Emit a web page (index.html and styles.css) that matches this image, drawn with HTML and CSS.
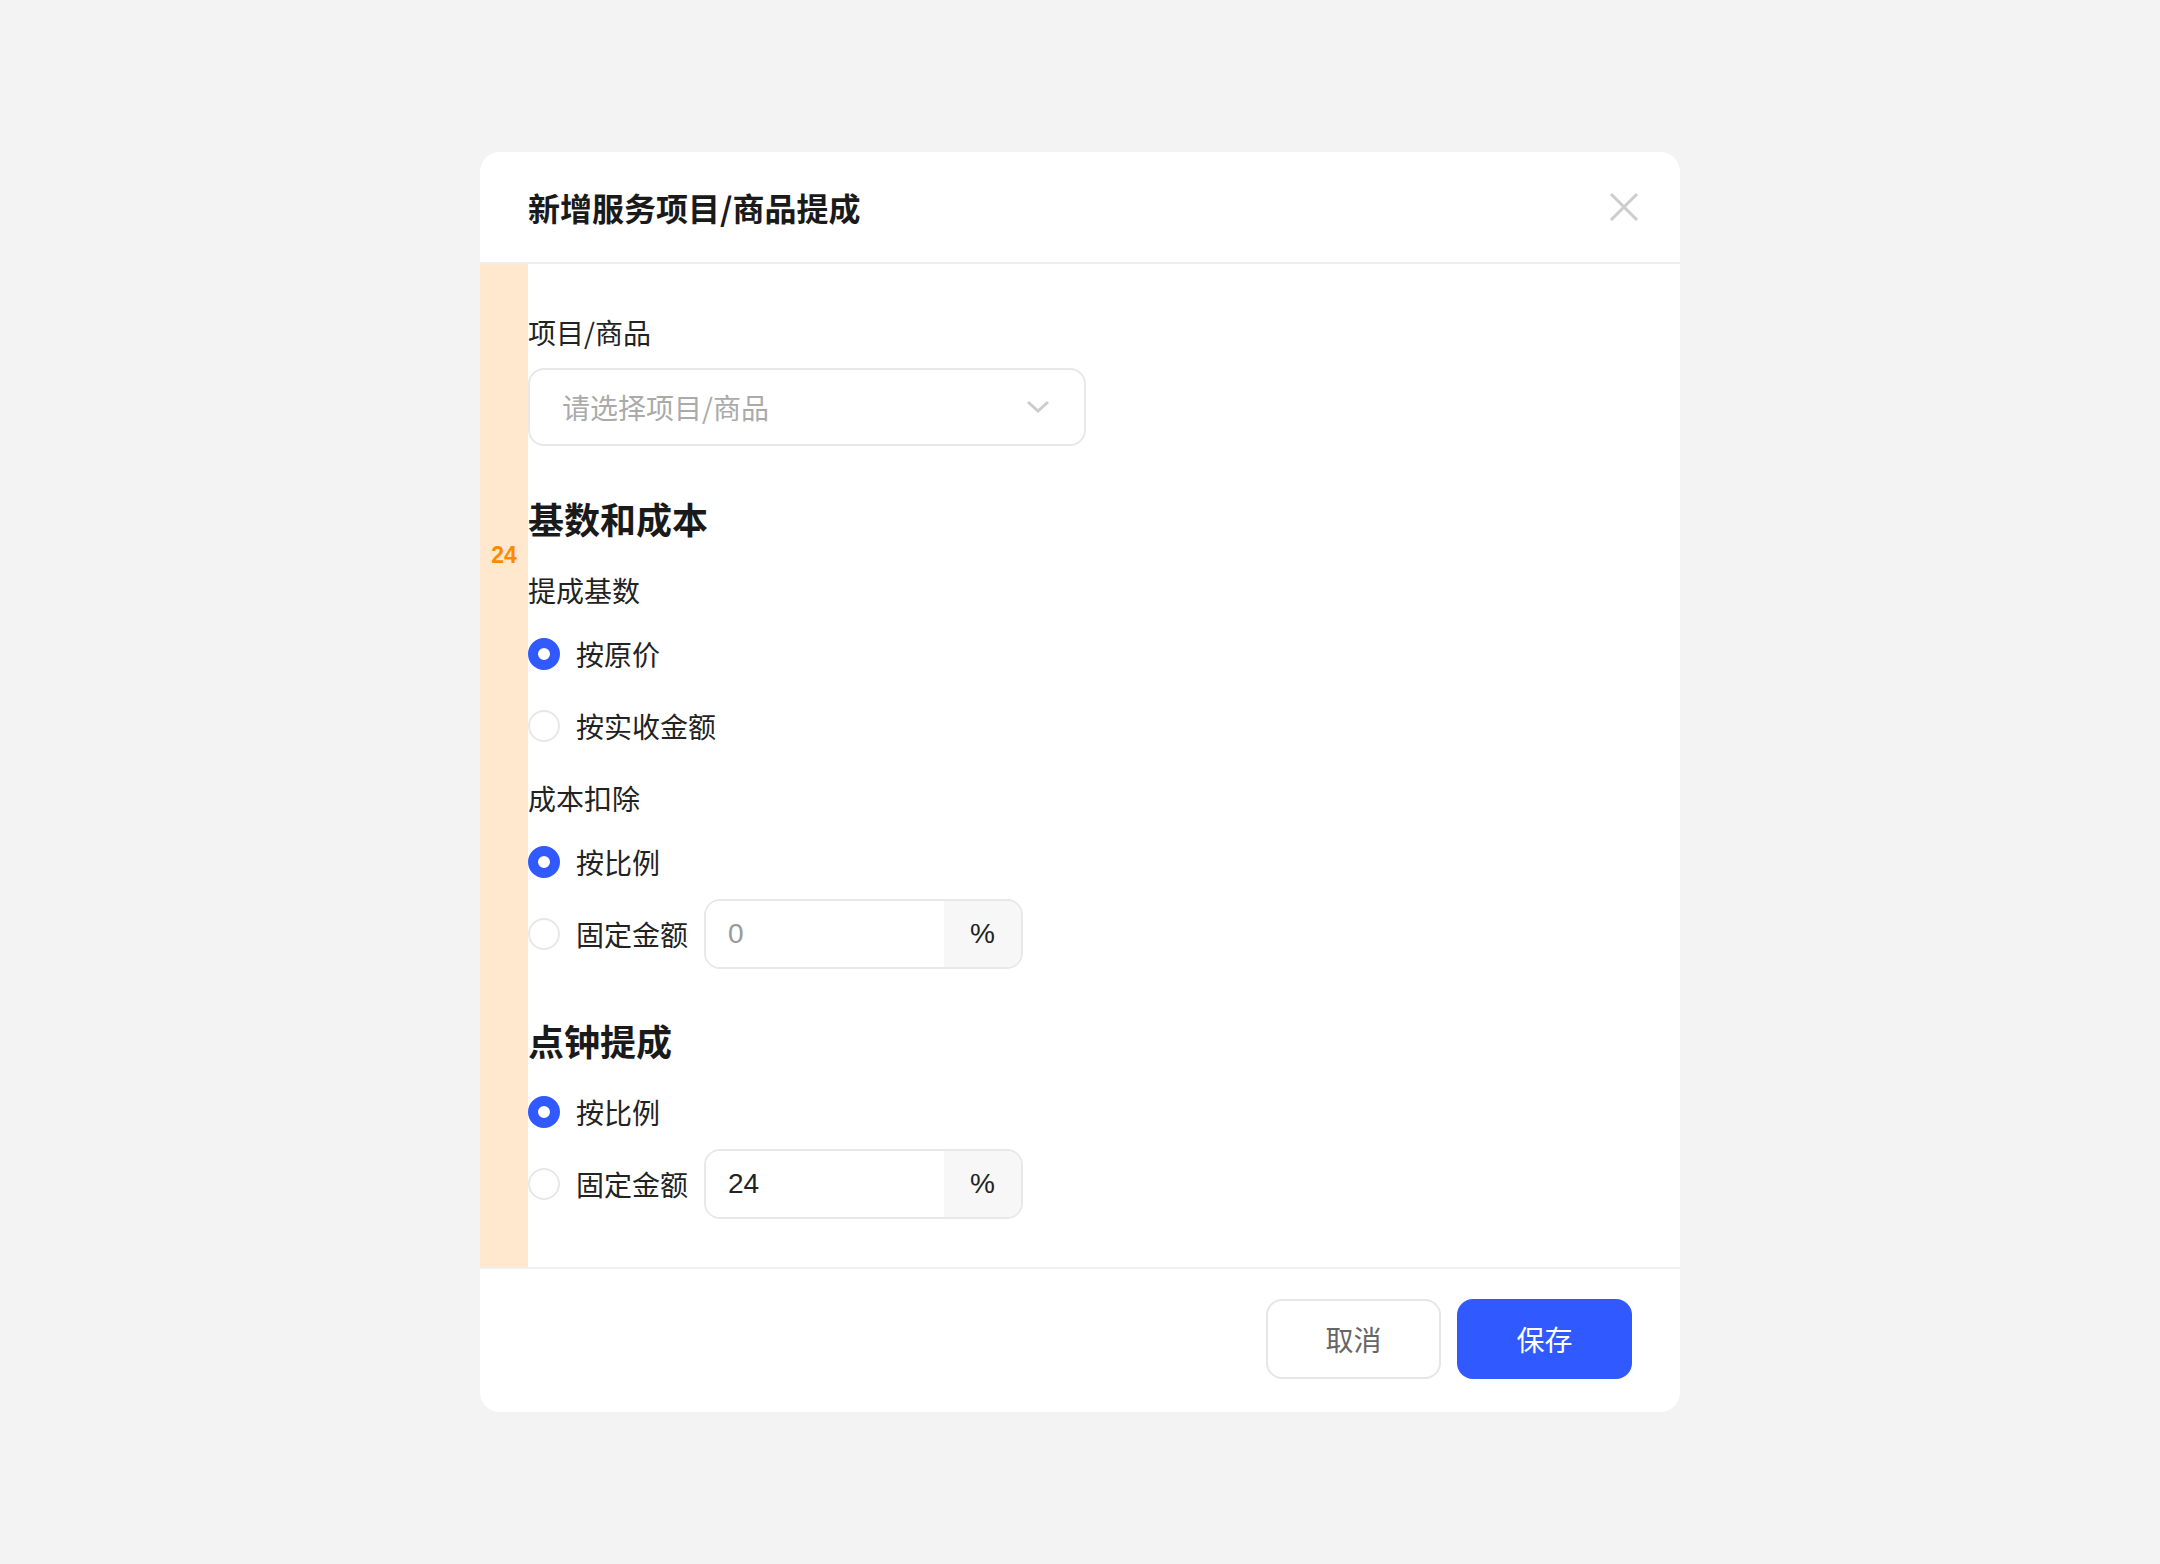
FILE: index.html
```html
<!DOCTYPE html>
<html lang="zh-CN">
<head>
  <meta charset="UTF-8">
  <meta name="viewport" content="width=device-width, initial-scale=1.0">
  <title>新增服务项目/商品提成</title>
  <link rel="stylesheet" href="styles.css">
</head>
<body>
  <div class="modal">
    <div class="modal-header">
      <h2 class="modal-title">新增服务项目/商品提成</h2>
      <button class="close" aria-label="关闭">
        <svg width="32" height="32" viewBox="0 0 32 32">
          <path d="M3 3 L29 29 M29 3 L3 29" stroke="#cccccc" stroke-width="3" fill="none"/>
        </svg>
      </button>
    </div>

    <div class="modal-body">
      <div class="field">
        <div class="field-label">项目/商品</div>
        <div class="select">
          <span>请选择项目/商品</span>
          <svg width="24" height="14" viewBox="0 0 24 14">
            <path d="M2 2 L12 11 L22 2" stroke="#cccccc" stroke-width="3" fill="none"/>
          </svg>
        </div>
      </div>

      <div class="section first">
        <h3 class="section-title">基数和成本<span class="gap-mark">24</span></h3>
        <div class="field">
          <div class="field-label">提成基数</div>
          <div class="radio-group">
            <label class="radio"><span class="radio-dot checked"></span>按原价</label>
            <label class="radio"><span class="radio-dot"></span>按实收金额</label>
          </div>
        </div>
        <div class="field">
          <div class="field-label">成本扣除</div>
          <div class="radio-group">
            <label class="radio"><span class="radio-dot checked"></span>按比例</label>
            <div class="radio">
              <span class="radio-dot"></span>固定金额
              <div class="input-group">
                <input type="text" placeholder="0">
                <span class="input-suffix">%</span>
              </div>
            </div>
          </div>
        </div>
      </div>

      <div class="section second">
        <h3 class="section-title">点钟提成</h3>
        <div class="radio-group">
          <label class="radio"><span class="radio-dot checked"></span>按比例</label>
          <div class="radio">
            <span class="radio-dot"></span>固定金额
            <div class="input-group">
              <input type="text" value="24">
              <span class="input-suffix">%</span>
            </div>
          </div>
        </div>
      </div>
    </div>

    <div class="modal-footer">
      <button class="btn btn-cancel">取消</button>
      <button class="btn btn-primary">保存</button>
    </div>
  </div>
</body>
</html>
```

FILE: styles.css
```css
/* Page */
body {
  margin: 0;
  min-height: 100vh;
  background-color: #f3f3f3;
  font-family: "Noto Sans CJK SC", sans-serif;
  color: #222;
  display: flex;
  align-items: center;
  justify-content: center;
}

/* Modal */
.modal {
  width: 1200px;
  background-color: #fff;
  border-radius: 20px;
  overflow: hidden;
}
.modal-header {
  height: 110px;
  padding: 0 40px 0 48px;
  display: flex;
  align-items: center;
  justify-content: space-between;
  border-bottom: 2px solid #f0f0f0;
}
.modal-title {
  margin: 0;
  font-size: 32px;
  font-weight: 600;
  color: #1a1a1a;
}
.close {
  width: 32px;
  height: 32px;
  padding: 0;
  border: 0;
  background: none;
  display: flex;
}

.modal-body {
  border-left: 48px solid #ffe8cd;
  padding: 48px 48px 55px 0;
  display: flex;
  flex-direction: column;
}

/* Fields */
.field-label {
  font-size: 28px;
  line-height: 40px;
}
.select {
  margin-top: 16px;
  width: 558px;
  height: 78px;
  box-sizing: border-box;
  border: 2px solid #e8e8e8;
  border-radius: 16px;
  padding: 0 34px 0 32px;
  display: flex;
  align-items: center;
  justify-content: space-between;
  font-size: 28px;
  color: #aaa;
}

.section.first {
  margin-top: 50px;
}
.section.second {
  margin-top: 56px;
}
.section-title {
  position: relative;
  margin: 0;
  padding-bottom: 6px;
  font-size: 36px;
  line-height: 44px;
  font-weight: 600;
  color: #1a1a1a;
}
.gap-mark {
  position: absolute;
  left: -48px;
  top: 100%;
  width: 48px;
  margin-top: -3px;
  line-height: 24px;
  text-align: center;
  font-family: "Liberation Sans", sans-serif;
  font-size: 23px;
  font-weight: 700;
  color: #ff8a00;
}
.section-title + .field,
.field + .field {
  margin-top: 24px;
}

/* Radios */
.radio-group {
  margin-top: 16px;
  display: flex;
  flex-direction: column;
  gap: 16px;
}
.radio {
  height: 56px;
  display: flex;
  align-items: center;
  gap: 16px;
  font-size: 28px;
  color: #222;
}
.radio-dot {
  width: 32px;
  height: 32px;
  box-sizing: border-box;
  border: 2px solid #e8e8e8;
  border-radius: 50%;
  background-color: #fff;
}
.radio-dot.checked {
  border: 10px solid #3059ff;
}

.input-group {
  width: 319px;
  height: 70px;
  margin: -7px 0;
  box-sizing: border-box;
  border: 2px solid #e8e8e8;
  border-radius: 16px;
  overflow: hidden;
  display: flex;
  font-family: "Liberation Sans", sans-serif;
}
.input-group input {
  flex: 1;
  min-width: 0;
  border: 0;
  outline: 0;
  padding: 0 22px;
  font-family: inherit;
  font-size: 28px;
  color: #222;
  background: #fff;
}
.input-group input::placeholder {
  color: #999;
}
.input-suffix {
  width: 77px;
  background-color: #f7f7f7;
  display: flex;
  align-items: center;
  justify-content: center;
  font-size: 28px;
}

/* Footer */
.modal-footer {
  height: 145px;
  box-sizing: border-box;
  padding: 30px 48px 0;
  border-top: 2px solid #f0f0f0;
  display: flex;
  align-items: flex-start;
  justify-content: flex-end;
  gap: 16px;
}
.btn {
  width: 175px;
  height: 80px;
  border-radius: 16px;
  font-family: inherit;
  font-size: 28px;
  cursor: pointer;
}
.btn-cancel {
  background-color: #fff;
  border: 2px solid #e6e6e6;
  color: #666;
}
.btn-primary {
  background-color: #3059ff;
  border: 0;
  color: #fff;
}
```
